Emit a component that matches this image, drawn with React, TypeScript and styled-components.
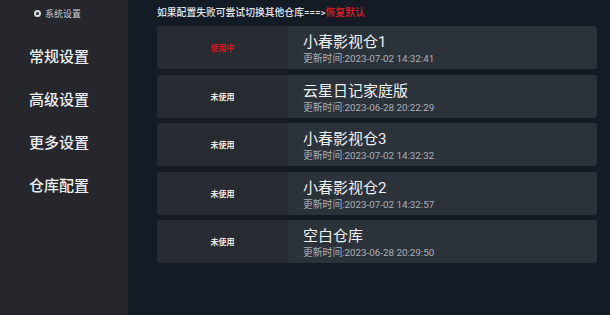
import React from "react";
import styled, { createGlobalStyle } from "styled-components";

interface Repo {
  name: string;
  time: string;
  active: boolean;
}

const repos: Repo[] = [
  { name: "小春影视仓1", time: "2023-07-02 14:32:41", active: true },
  { name: "云星日记家庭版", time: "2023-06-28 20:22:29", active: false },
  { name: "小春影视仓3", time: "2023-07-02 14:32:32", active: false },
  { name: "小春影视仓2", time: "2023-07-02 14:32:57", active: false },
  { name: "空白仓库", time: "2023-06-28 20:29:50", active: false },
];

const menu = ["常规设置", "高级设置", "更多设置", "仓库配置"];

const App: React.FC = () => {
  return (
    <>
      <GlobalStyle />
      <Page>
        <Sidebar>
          <SideHead>
            <Dot />
            系统设置
          </SideHead>
          <Menu>
            {menu.map((m) => (
              <MenuItem key={m}>{m}</MenuItem>
            ))}
          </Menu>
        </Sidebar>
        <Main>
          <Tip>
            如果配置失败可尝试切换其他仓库===&gt;<Reset>恢复默认</Reset>
          </Tip>
          <List>
            {repos.map((r) => (
              <Card key={r.name}>
                <Status active={r.active}>{r.active ? "使用中" : "未使用"}</Status>
                <Info>
                  <Title>{r.name}</Title>
                  <Time>更新时间:{r.time}</Time>
                </Info>
              </Card>
            ))}
          </List>
        </Main>
      </Page>
    </>
  );
};

export default App;

const GlobalStyle = createGlobalStyle`
  body {
    margin: 0;
    background: #141b25;
    font-family: Roboto, "Noto Sans CJK SC", sans-serif;
  }
`;

const Page = styled.div`
  width: 610px;
  height: 315px;
  display: flex;
  overflow: hidden;
`;

const Sidebar = styled.div`
  width: 128px;
  flex-shrink: 0;
  background: #25272c;
  display: flex;
  flex-direction: column;
`;

const SideHead = styled.div`
  display: flex;
  align-items: center;
  gap: 4px;
  padding: 7px 0 0 34px;
  height: 12px;
  font-size: 9px;
  color: #c9cbd0;
`;

const Dot = styled.span`
  width: 3px;
  height: 3px;
  border: 2px solid #d8dade;
  border-radius: 50%;
`;

const Menu = styled.div`
  display: flex;
  flex-direction: column;
  gap: 21px;
  padding: 27px 0 0 29px;
`;

const MenuItem = styled.div`
  font-size: 15px;
  line-height: 22px;
  font-weight: 500;
  color: #eceef1;
`;

const Main = styled.div`
  flex: 1;
  padding: 6px 13px 0 29px;
  display: flex;
  flex-direction: column;
`;

const Tip = styled.div`
  font-size: 9.8px;
  line-height: 14px;
  font-weight: 500;
  color: #e4e6ea;
  height: 14px;
`;

const Reset = styled.span`
  color: #e02024;
`;

const List = styled.div`
  margin-top: 6px;
  display: flex;
  flex-direction: column;
  gap: 5.5px;
`;

const Card = styled.div`
  height: 43px;
  display: flex;
  border-radius: 3px;
  overflow: hidden;
  background: #2c323a;
`;

const Status = styled.div<{ active: boolean }>`
  width: 131px;
  display: flex;
  align-items: center;
  justify-content: center;
  background: #282c32;
  font-size: 8px;
  font-weight: 700;
  color: ${(p) => (p.active ? "#d8161c" : "#e8eaed")};
`;

const Info = styled.div`
  flex: 1;
  display: flex;
  flex-direction: column;
  justify-content: center;
  padding: 2px 0 0 15px;
  gap: 2px;
`;

const Title = styled.div`
  font-size: 15px;
  line-height: 18px;
  color: #eef0f2;
`;

const Time = styled.div`
  font-size: 9.8px;
  line-height: 11px;
  color: #aab0b8;
`;
